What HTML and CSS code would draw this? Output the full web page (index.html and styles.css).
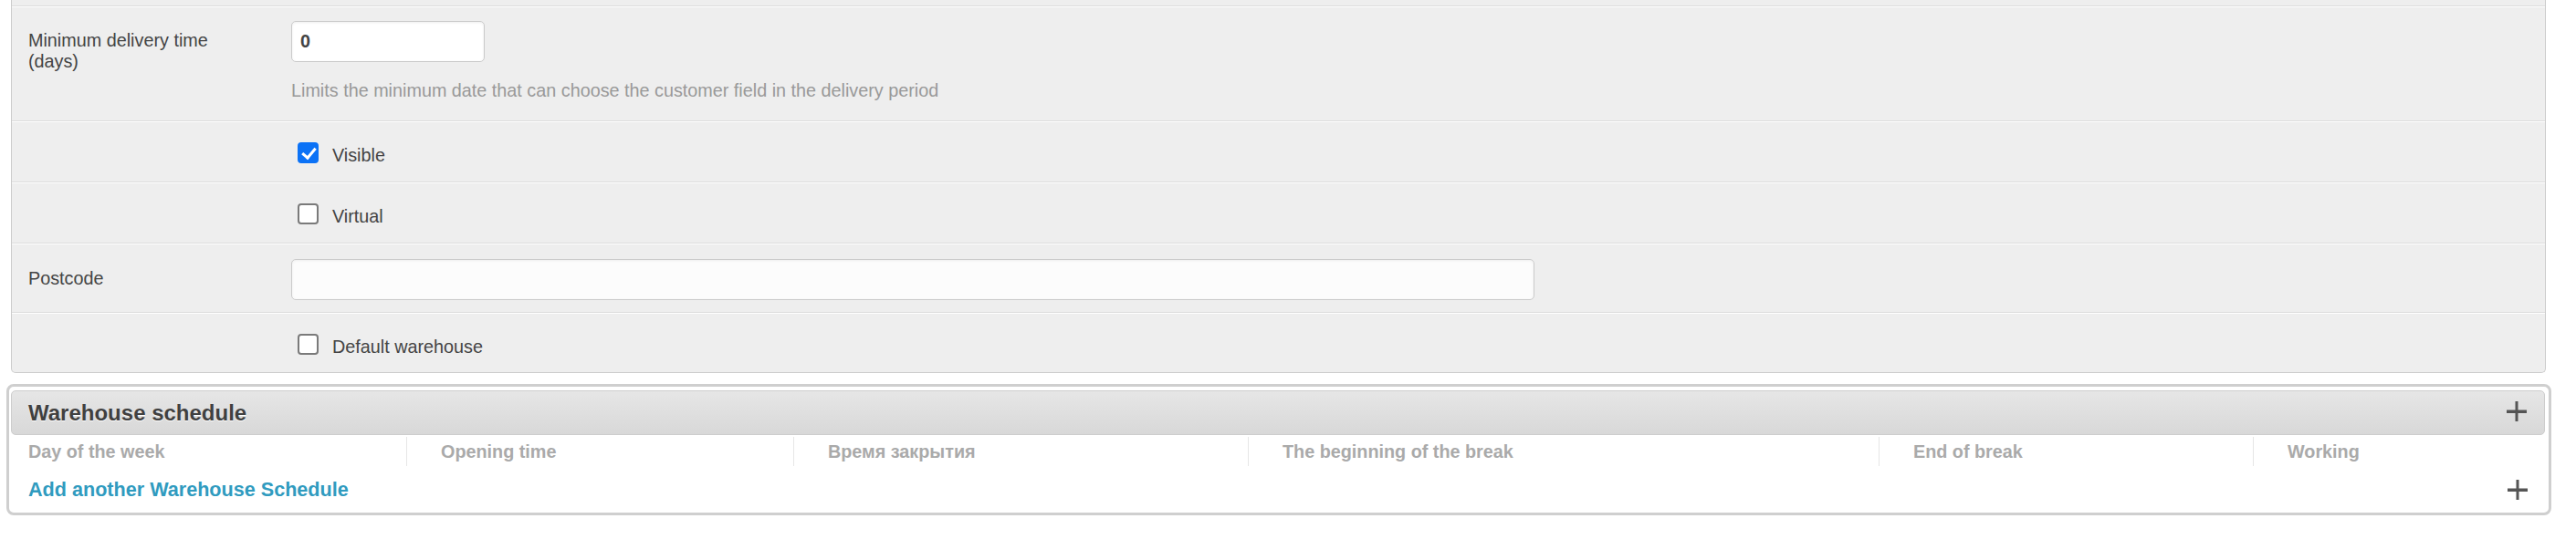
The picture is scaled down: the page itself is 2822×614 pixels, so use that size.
FILE: index.html
```html
<!DOCTYPE html>
<html lang="en">
<head>
<meta charset="utf-8">
<title>Warehouse</title>
<link rel="stylesheet" href="styles.css">
</head>
<body>
<div class="module">
  <div class="row row-prev"></div>
  <div class="row row-field row-min">
    <label class="label" for="min_days">Minimum delivery time (days)</label>
    <div class="field">
      <input id="min_days" class="text text-short" type="text" value="0">
      <p class="help">Limits the minimum date that can choose the customer field in the delivery period</p>
    </div>
  </div>
  <div class="row row-field row-check">
    <div></div>
    <div class="check"><input type="checkbox" id="visible" checked><label for="visible">Visible</label></div>
  </div>
  <div class="row row-field row-check">
    <div></div>
    <div class="check"><input type="checkbox" id="virtual"><label for="virtual">Virtual</label></div>
  </div>
  <div class="row row-field row-post">
    <label class="label" for="postcode">Postcode</label>
    <div class="field">
      <input id="postcode" class="text text-long" type="text" value="">
    </div>
  </div>
  <div class="row row-field row-check row-last">
    <div></div>
    <div class="check"><input type="checkbox" id="default_wh"><label for="default_wh">Default warehouse</label></div>
  </div>
</div>

<div class="group">
  <div class="group-head">
    <h2 class="group-title">Warehouse schedule</h2>
    <svg class="plus" viewBox="0 0 22 22" width="22" height="22"><rect x="0" y="9.5" width="22" height="3.5" fill="#555"/><rect x="9.5" y="0" width="3" height="22" fill="#555"/></svg>
  </div>
  <div class="cols">
    <div class="col">Day of the week</div>
    <div class="col">Opening time</div>
    <div class="col">Время закрытия</div>
    <div class="col">The beginning of the break</div>
    <div class="col">End of break</div>
    <div class="col">Working</div>
  </div>
  <div class="add-row">
    <a class="add-link" href="#">Add another Warehouse Schedule</a>
    <svg class="plus" viewBox="0 0 22 22" width="22" height="22"><rect x="0" y="9.5" width="22" height="3.5" fill="#555"/><rect x="9.5" y="0" width="3" height="22" fill="#555"/></svg>
  </div>
</div>
</body>
</html>
```
FILE: styles.css
```css
* { box-sizing: border-box; }
html, body { margin: 0; padding: 0; background: #fff; }
body {
  font-family: "Liberation Sans", Arial, Helvetica, sans-serif;
  font-size: 19.8px;
  color: #444;
}

.module {
  margin: 0 0 0 12px;
  width: 2777px;
  background: #eee;
  border: 1px solid #ccc;
  border-top: 0;
  border-radius: 0 0 5px 5px;
}
.row {
  border-top: 1px solid #fff;
  border-bottom: 1px solid #dcdcdc;
}
.row-prev { height: 7px; border-top: 0; }
.row:last-child { border-bottom: 0; }

.row-field {
  display: grid;
  grid-template-columns: 288px 1fr;
  padding: 0 18px;
}
.row-min { padding-top: 15px; padding-bottom: 21px; }
.row-post { padding-top: 16px; padding-bottom: 13px; }
.row-check { padding-top: 22px; padding-bottom: 17px; }
.row-last { padding-bottom: 16px; }

.label {
  display: block;
  margin-top: 10px;
  max-width: 230px;
  line-height: 23px;
  color: #444;
}

.text {
  display: block;
  height: 45px;
  padding: 0 9px;
  border: 1px solid #cbcbcb;
  border-radius: 5px;
  background: #fff;
  box-shadow: inset 0 1px 3px 0 #eee;
  font-family: "Liberation Sans", Arial, sans-serif;
  font-size: 19.8px;
  font-weight: bold;
  color: #444;
  outline: none;
}
.text-short { width: 212px; }
.text-long { width: 1362px; background: #fcfcfc; }

.help {
  margin: 20px 0 0;
  line-height: 23px;
  color: #999;
}

.check {
  display: flex;
  align-items: flex-start;
}
.check input {
  appearance: none;
  -webkit-appearance: none;
  position: relative;
  flex: none;
  width: 23px;
  height: 23px;
  margin: 0 15px 0 7px;
  border: 2px solid #7a7a7a;
  border-radius: 4px;
  background: #fff;
}
.check input:checked {
  background: #0b72f6;
  border-color: #0b72f6;
}
.check input:checked::after {
  content: "";
  position: absolute;
  left: 6px;
  top: 1px;
  width: 6px;
  height: 12px;
  border: solid #fff;
  border-width: 0 3px 3px 0;
  transform: rotate(40deg);
}
.check label {
  padding-top: 3px;
  line-height: 23px;
  color: #444;
}

.group {
  margin: 12px 0 0 7px;
  width: 2788px;
  border: 3px solid #cfcfcf;
  border-radius: 8px;
  padding: 4px 4px 0 2px;
  background: #fff;
}
.group-head {
  height: 49px;
  display: flex;
  align-items: center;
  justify-content: space-between;
  padding: 0 19px 3px 18px;
  background: linear-gradient(#e6e6e6, #d8d8d8);
  border: 1px solid #cdcdcd;
  border-radius: 5px;
}
.group-title {
  margin: 0;
  font-size: 24px;
  font-weight: bold;
  color: #404040;
  text-shadow: 0 1px 0 #fff;
  padding-top: 3px;
}
.plus { display: block; flex: none; }

.cols {
  display: grid;
  grid-template-columns: 433px 424px 498px 691px 410px 1fr;
  height: 35px;
  padding-top: 2px;
}
.col {
  height: 32px;
  line-height: 32px;
  padding-left: 37px;
  border-left: 1px solid #e6e6e6;
  font-weight: bold;
  color: #aaa;
  white-space: nowrap;
}
.col:first-child { padding-left: 19px; border-left: 0; }

.add-row {
  height: 50px;
  display: flex;
  align-items: center;
  justify-content: space-between;
  padding: 0 19px;
}
.add-link {
  font-size: 21.6px;
  font-weight: bold;
  color: #309bbf;
  text-decoration: none;
}
```
